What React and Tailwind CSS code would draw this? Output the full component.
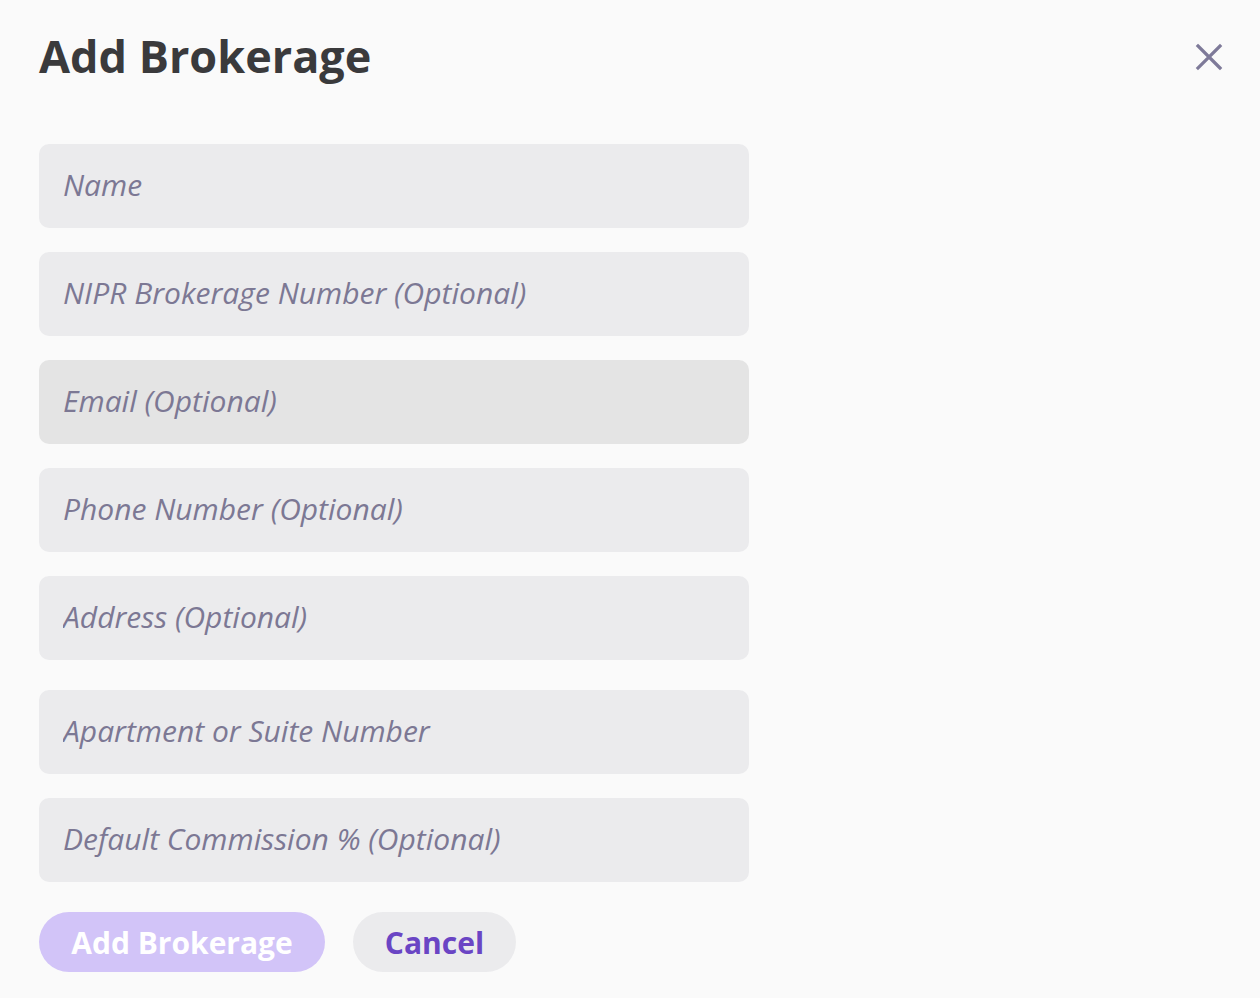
import React from "react";

function Field({ placeholder, dark }) {
  return (
    <input
      type="text"
      placeholder={placeholder}
      className={
        "block w-[710px] h-[84px] rounded-[10px] px-6 pb-[4px] text-[30px] italic text-[#3a3a3c] outline-none placeholder:text-[#7c7894] placeholder:italic " +
        (dark ? "bg-[#e4e4e4]" : "bg-[#ebebed]")
      }
      style={{ fontFamily: '"Open Sans", sans-serif' }}
    />
  );
}

export default function App() {
  return (
    <div
      className="min-h-[998px] w-full bg-[#fafafa] px-[39px] pt-[24px]"
      style={{ fontFamily: '"Open Sans", sans-serif' }}
    >
      <div className="flex items-start justify-between">
        <h1 className="text-[45px] font-bold leading-[64px] text-[#3a3a3c]">Add Brokerage</h1>
        <button className="mt-[19px] mr-[-2px] text-[#7e7a99]" aria-label="Close">
          <svg width="28" height="28" viewBox="0 0 28 28" fill="none" stroke="currentColor" strokeWidth="3.2" strokeLinecap="square">
            <path d="M3 3L25 25M25 3L3 25" />
          </svg>
        </button>
      </div>
      <div className="mt-[56px] flex flex-col gap-6">
        <Field placeholder="Name" />
        <Field placeholder="NIPR Brokerage Number (Optional)" />
        <Field placeholder="Email (Optional)" dark />
        <Field placeholder="Phone Number (Optional)" />
        <Field placeholder="Address (Optional)" />
        <div className="mt-[6px]">
          <Field placeholder="Apartment or Suite Number" />
        </div>
        <Field placeholder="Default Commission % (Optional)" />
      </div>
      <div className="mt-[30px] flex gap-7">
        <button className="h-[60px] w-[286px] rounded-full bg-[#d2c4f8] text-[30px] font-bold text-white">
          Add Brokerage
        </button>
        <button className="h-[60px] w-[163px] rounded-full bg-[#ebebed] text-[30px] font-bold text-[#6a45c4]">
          Cancel
        </button>
      </div>
    </div>
  );
}
